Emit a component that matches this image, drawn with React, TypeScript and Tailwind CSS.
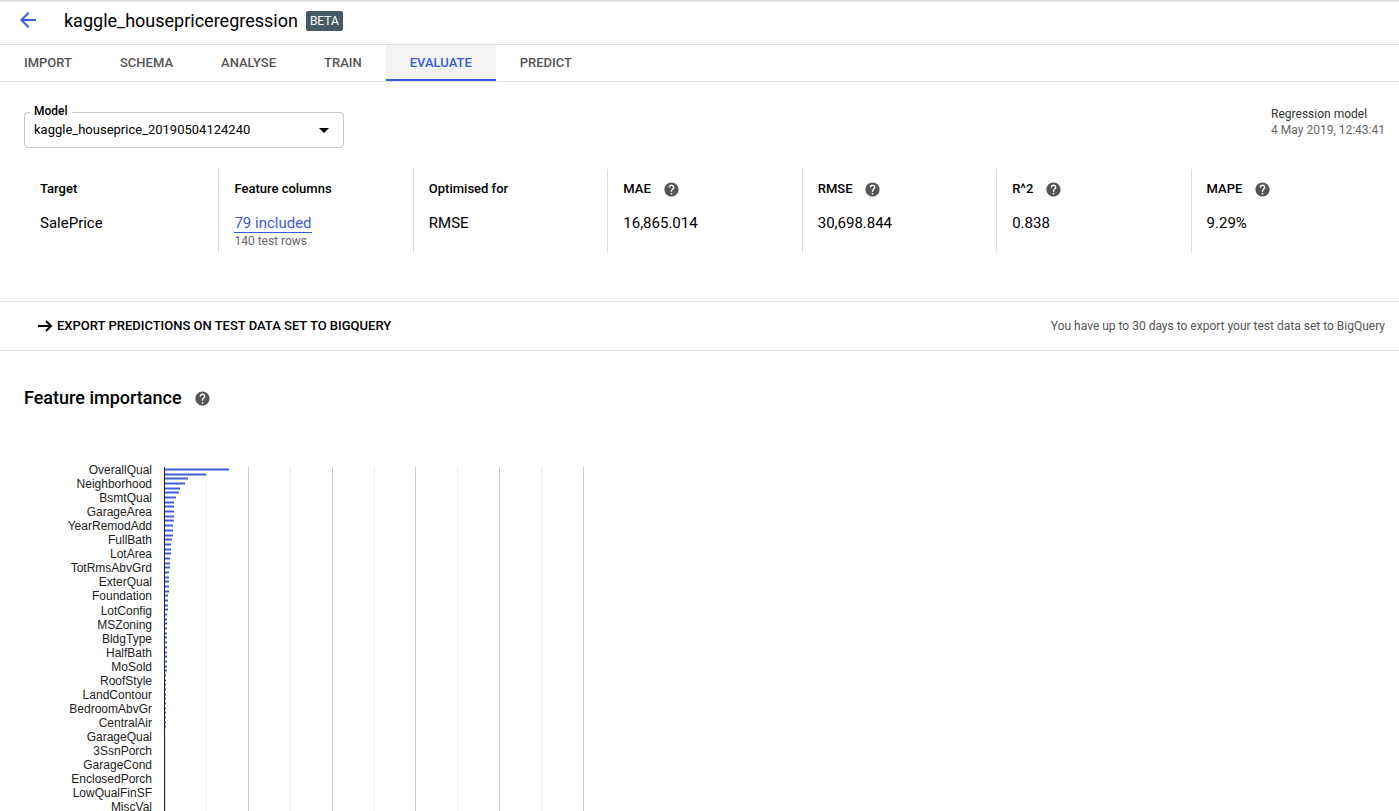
import React from "react";
import { MdArrowBack, MdArrowDropDown, MdHelp } from "react-icons/md";

const tabs = ["IMPORT", "SCHEMA", "ANALYSE", "TRAIN", "EVALUATE", "PREDICT"];

type Metric = { label: string; value: string; help?: boolean; link?: boolean; note?: string };

const metrics: Metric[] = [
  { label: "Target", value: "SalePrice" },
  { label: "Feature columns", value: "79 included", link: true, note: "140 test rows" },
  { label: "Optimised for", value: "RMSE" },
  { label: "MAE", value: "16,865.014", help: true },
  { label: "RMSE", value: "30,698.844", help: true },
  { label: "R^2", value: "0.838", help: true },
  { label: "MAPE", value: "9.29%", help: true },
];

const features = [
  "OverallQual", "Neighborhood", "BsmtQual", "GarageArea", "YearRemodAdd", "FullBath", "LotArea",
  "TotRmsAbvGrd", "ExterQual", "Foundation", "LotConfig", "MSZoning", "BldgType", "HalfBath", "MoSold",
  "RoofStyle", "LandContour", "BedroomAbvGr", "CentralAir", "GarageQual", "3SsnPorch", "GarageCond",
  "EnclosedPorch", "LowQualFinSF", "MiscVal",
];

const bars = [
  64, 41, 23, 20, 15, 14, 11, 9, 9, 9, 9, 9, 8, 8, 8, 7, 6, 6, 6, 5, 5, 5, 4, 4, 4, 4, 4, 3, 3, 3, 3,
  2, 2, 2, 2, 2, 2, 2, 2, 2, 2, 2, 2, 2, 1, 1, 1, 1, 1, 1, 1, 1, 1, 1, 1, 1,
];

const gridLines = [182, 224, 266, 308, 350, 391, 433, 475, 517, 559];

function Help({ topic }: { topic: string }) {
  return (
    <button type="button" aria-label={"Help: " + topic} className="text-[#555]">
      <MdHelp size={17} />
    </button>
  );
}

function ImportanceChart() {
  return (
    <svg width="580" height="376" role="img" aria-label="Feature importance" className="block shrink-0" fontFamily="Liberation Sans, Arial, sans-serif">
      {gridLines.map((x, i) => (
        <rect key={x} x={x} y="12" width="1" height="364" fill={i % 2 ? "#ccc" : "#ebebeb"} />
      ))}
      {bars.map((w, i) => {
        const y = 13 + Math.round(i * 4.68);
        return (
          <g key={i} fill="#3f5fd0">
            <rect x="141" y={y} width={w} height="3" opacity="0.5" />
            <rect x="141" y={y + 1} width={w} height="1" />
          </g>
        );
      })}
      <rect x="141" y="274" width="1" height="102" fill="#3f5fd0" opacity="0.2" />
      <rect x="140" y="12" width="1" height="364" fill="#222" />
      {features.map((name, i) => (
        <text key={name} x="128" y={19 + Math.round(i * 14.05)} textAnchor="end" fontSize="12" fill="#222">
          {name}
        </text>
      ))}
    </svg>
  );
}

export default function App() {
  return (
    <div className="flex h-screen flex-col overflow-hidden bg-white font-['Roboto',sans-serif] text-black">
      <header className="flex h-[45px] shrink-0 items-center border-b border-[#e0e0e0] px-4 pb-0.5 shadow-[inset_0_3px_3px_-2px_#ccc]">
        <button type="button" aria-label="Back" className="pb-0.5 text-[#3b5bdb]">
          <MdArrowBack size={24} />
        </button>
        <h1 className="ml-6 text-lg">kaggle_housepriceregression</h1>
        <span className="ml-2 flex h-5 items-center rounded-xs bg-[#455a64] px-1 text-xs text-white">BETA</span>
      </header>

      <nav className="flex h-[37px] shrink-0 border-b border-[#e0e0e0] text-[13px] font-medium">
        {tabs.map((tab) => (
          <a
            key={tab}
            href={"#" + tab.toLowerCase()}
            className={
              tab === "EVALUATE"
                ? "flex items-center border-b-2 border-[#3b5bdb] bg-[#f4f4f4] px-6 pt-0.5 text-[#3b5bdb]"
                : "flex items-center border-b-2 border-transparent px-6 pt-0.5 text-[#555]"
            }
          >
            {tab}
          </a>
        ))}
      </nav>

      <main className="flex flex-col">
        <div className="flex items-start justify-between pt-[30px] pr-3.5 pl-6">
          <div className="relative w-80">
            <label htmlFor="model" className="absolute -top-[9px] left-1.5 bg-white px-1 text-xs leading-4 font-medium">
              Model
            </label>
            <select
              id="model"
              className="block h-9 w-full appearance-none rounded-sm border border-[#c8c8c8] bg-white pr-8 pl-[9px] text-[13px]"
            >
              <option>kaggle_houseprice_20190504124240</option>
            </select>
            <MdArrowDropDown size={24} className="pointer-events-none absolute top-1.5 right-2" />
          </div>
          <div className="-mt-1.5 text-xs leading-4 text-[#666]">
            <p className="text-[#333]">Regression model</p>
            <p>4 May 2019, 12:43:41</p>
          </div>
        </div>

        <dl className="mt-[21px] mr-3.5 ml-6 grid grid-cols-7">
          {metrics.map((m, i) => (
            <div key={m.label} className={i ? "h-[84px] border-l border-[#ddd] pt-2.5 pl-[15px]" : "h-[84px] pt-2.5 pl-4"}>
              <dt className="flex h-5 items-center gap-3 text-[13px] font-medium">
                {m.label}
                {m.help && <Help topic={m.label} />}
              </dt>
              <dd className="mt-3.5 text-[15px] leading-5">
                {m.link ? (
                  <a href="#columns" className="block h-5 w-fit border-b border-[#3b5bdb] text-[#3b5bdb]">
                    {m.value}
                  </a>
                ) : (
                  m.value
                )}
                {m.note && <p className="text-xs leading-4 text-[#666]">{m.note}</p>}
              </dd>
            </div>
          ))}
        </dl>

        <div className="mt-12 flex h-[50px] items-center justify-between border-y border-[#e0e0e0] pr-3.5 pl-[37px]">
          <button type="button" className="flex items-center gap-1 text-[13px] font-medium">
            <svg width="16" height="16" viewBox="0 0 16 16" fill="none" stroke="currentColor" strokeWidth="2" aria-hidden="true">
              <path d="M1 8H14M9 3L14 8L9 13" />
            </svg>
            EXPORT PREDICTIONS ON TEST DATA SET TO BIGQUERY
          </button>
          <p className="text-xs text-[#555]">You have up to 30 days to export your test data set to BigQuery</p>
        </div>

        <section className="flex flex-col pl-6">
          <div className="mt-[33px] flex h-7 items-center gap-3">
            <h2 className="text-lg font-medium">Feature importance</h2>
            <Help topic="Feature importance" />
          </div>
          <div className="mt-[43px]">
            <ImportanceChart />
          </div>
        </section>
      </main>
    </div>
  );
}
